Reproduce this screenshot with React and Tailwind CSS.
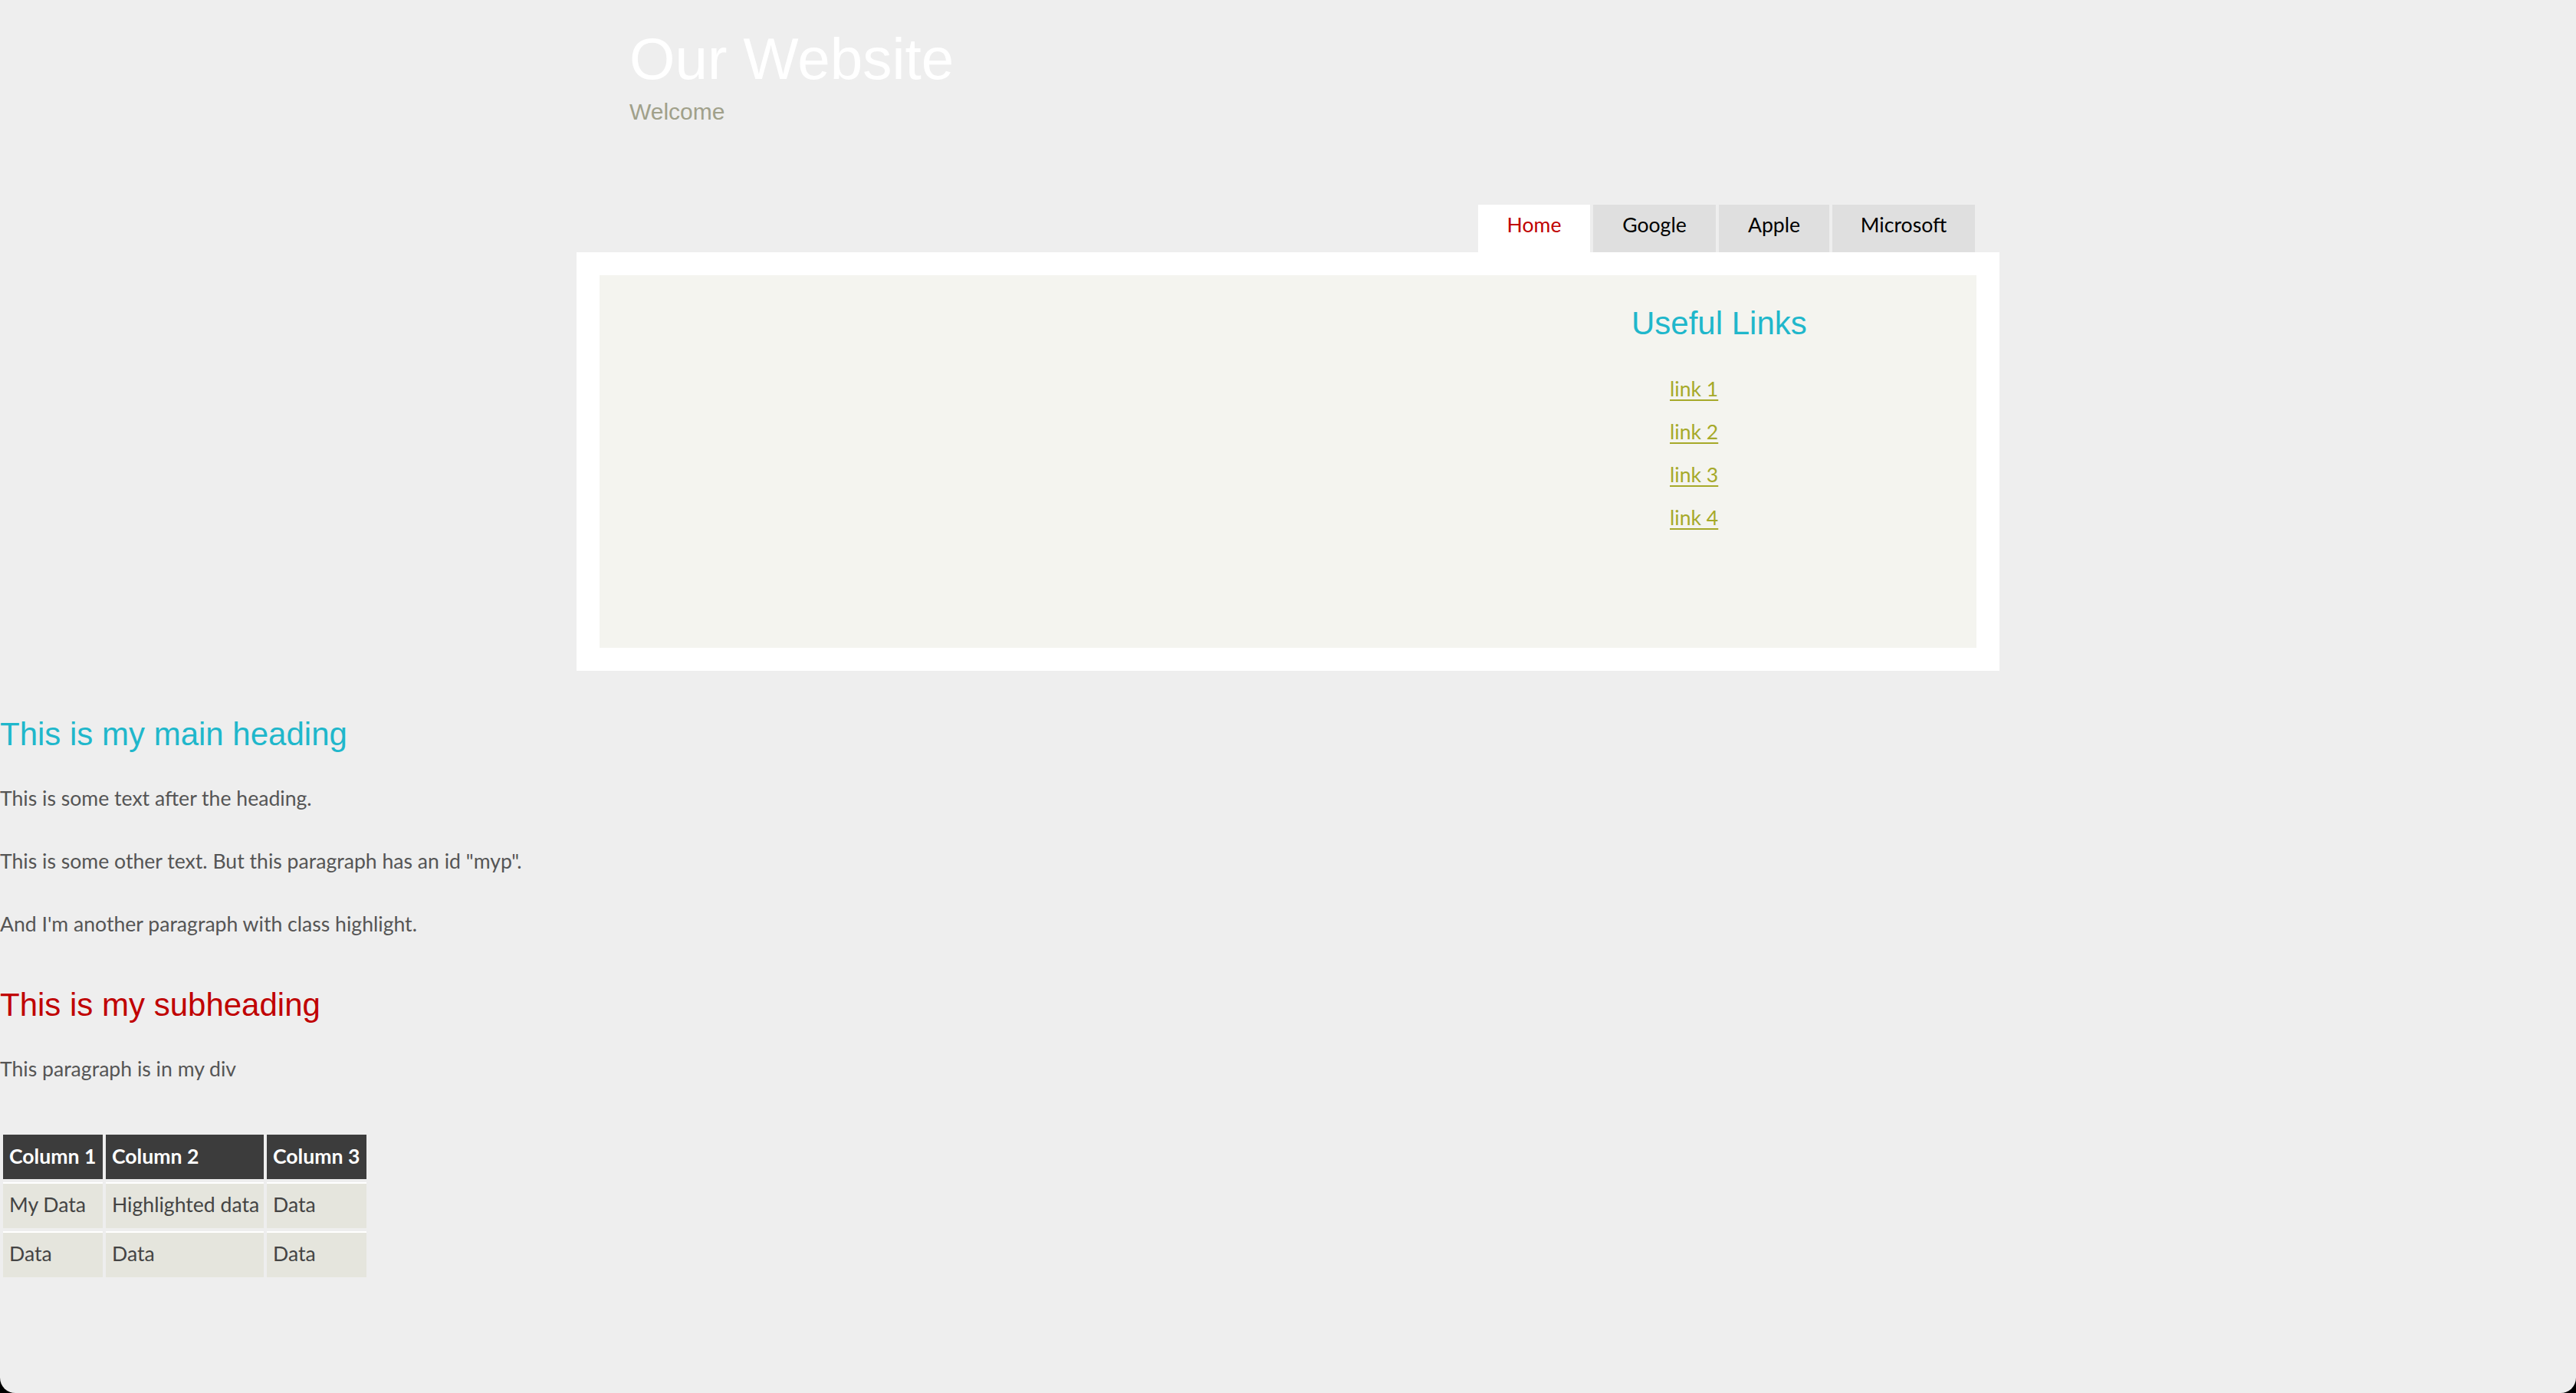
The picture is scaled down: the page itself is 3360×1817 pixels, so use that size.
import React from "react";

const body = "font-['Lato','Noto_Sans',sans-serif]";
const arial = "font-['Liberation_Sans',Arial,sans-serif]";

function Tab({ label, active, width }) {
  return (
    <div
      className={`${width} h-[62px] pt-[13px] text-center text-[26.6px] leading-[26px] ${body} ${
        active ? "bg-white text-[#c00000]" : "bg-[#dfdfdf] text-black"
      }`}
    >
      {label}
    </div>
  );
}

export default function App() {
  const links = ["link 1", "link 2", "link 3", "link 4"];
  return (
    <div className="bg-black h-[1817px] w-full">
      <div className="bg-[#eeeeee] h-full w-full rounded-b-[20px] overflow-hidden">
        <div className="w-[1856px] mx-auto">
          <header className="pt-[39px] pl-[69px]">
            <h1 className={`${arial} text-[76.4px] leading-[76px] text-white font-normal`}>Our Website</h1>
            <p className={`${arial} mt-[16px] text-[30px] leading-[30px] text-[#a0a08a]`}>Welcome</p>
          </header>
          <nav className="mt-[106px] flex justify-end gap-[4px] pr-[32px]">
            <Tab label="Home" active width="w-[146px]" />
            <Tab label="Google" width="w-[160px]" />
            <Tab label="Apple" width="w-[144px]" />
            <Tab label="Microsoft" width="w-[186px]" />
          </nav>
          <div className="bg-white p-[30px]">
            <div className="bg-[#f4f4ef] h-[486px] flex justify-end">
              <aside className="w-[450px] pt-[42px]">
                <h3 className={`${arial} text-[42px] leading-[42px] text-[#1fb7cb] font-normal`}>Useful Links</h3>
                <ul className="mt-[36px] pl-[50px]">
                  {links.map((l) => (
                    <li key={l} className={`${body} text-[26.6px] leading-[56px]`}>
                      <a href="#" className="text-[#a6a929] underline underline-offset-[4px] decoration-[2px]">
                        {l}
                      </a>
                    </li>
                  ))}
                </ul>
              </aside>
            </div>
          </div>
        </div>

        <main>
          <h1 className={`${arial} mt-[62px] text-[42px] leading-[42px] text-[#1fb7cb] font-normal`}>
            This is my main heading
          </h1>
          <div className={`${body} text-[26.6px] leading-[82px] text-[#555555] mt-[21px]`}>
            <p>This is some text after the heading.</p>
            <p>This is some other text. But this paragraph has an id "myp".</p>
            <p>And I'm another paragraph with class highlight.</p>
          </div>
          <h2 className={`${arial} mt-[44px] text-[42px] leading-[42px] text-[#c00000] font-normal`}>
            This is my subheading
          </h2>
          <div>
            <p className={`${body} mt-[49px] text-[26.6px] leading-[26px] text-[#555555]`}>This paragraph is in my div</p>
            <table className={`${body} mt-[69px] table-fixed w-[482px] border-separate border-spacing-[4px] text-[26.6px] leading-[26px]`}>
              <thead>
                <tr>
                  <th className="w-[130px] h-[58px] bg-[#3c3c3c] text-white font-bold text-left px-[8px] pt-[15px] pb-[17px]">Column 1</th>
                  <th className="w-[206px] h-[58px] bg-[#3c3c3c] text-white font-bold text-left px-[8px] pt-[15px] pb-[17px]">Column 2</th>
                  <th className="w-[130px] h-[58px] bg-[#3c3c3c] text-white font-bold text-left px-[8px] pt-[15px] pb-[17px]">Column 3</th>
                </tr>
              </thead>
              <tbody>
                {[
                  ["My Data", "Highlighted data", "Data"],
                  ["Data", "Data", "Data"],
                ].map((row, i) => (
                  <tr key={i}>
                    {row.map((c, j) => (
                      <td
                        key={j}
                        className="h-[60px] border-t-[2px] border-white bg-[#e5e5dd] text-[#444444] px-[8px] pt-[14px] pb-[18px] whitespace-nowrap"
                      >
                        {c}
                      </td>
                    ))}
                  </tr>
                ))}
              </tbody>
            </table>
          </div>
        </main>
      </div>
    </div>
  );
}
